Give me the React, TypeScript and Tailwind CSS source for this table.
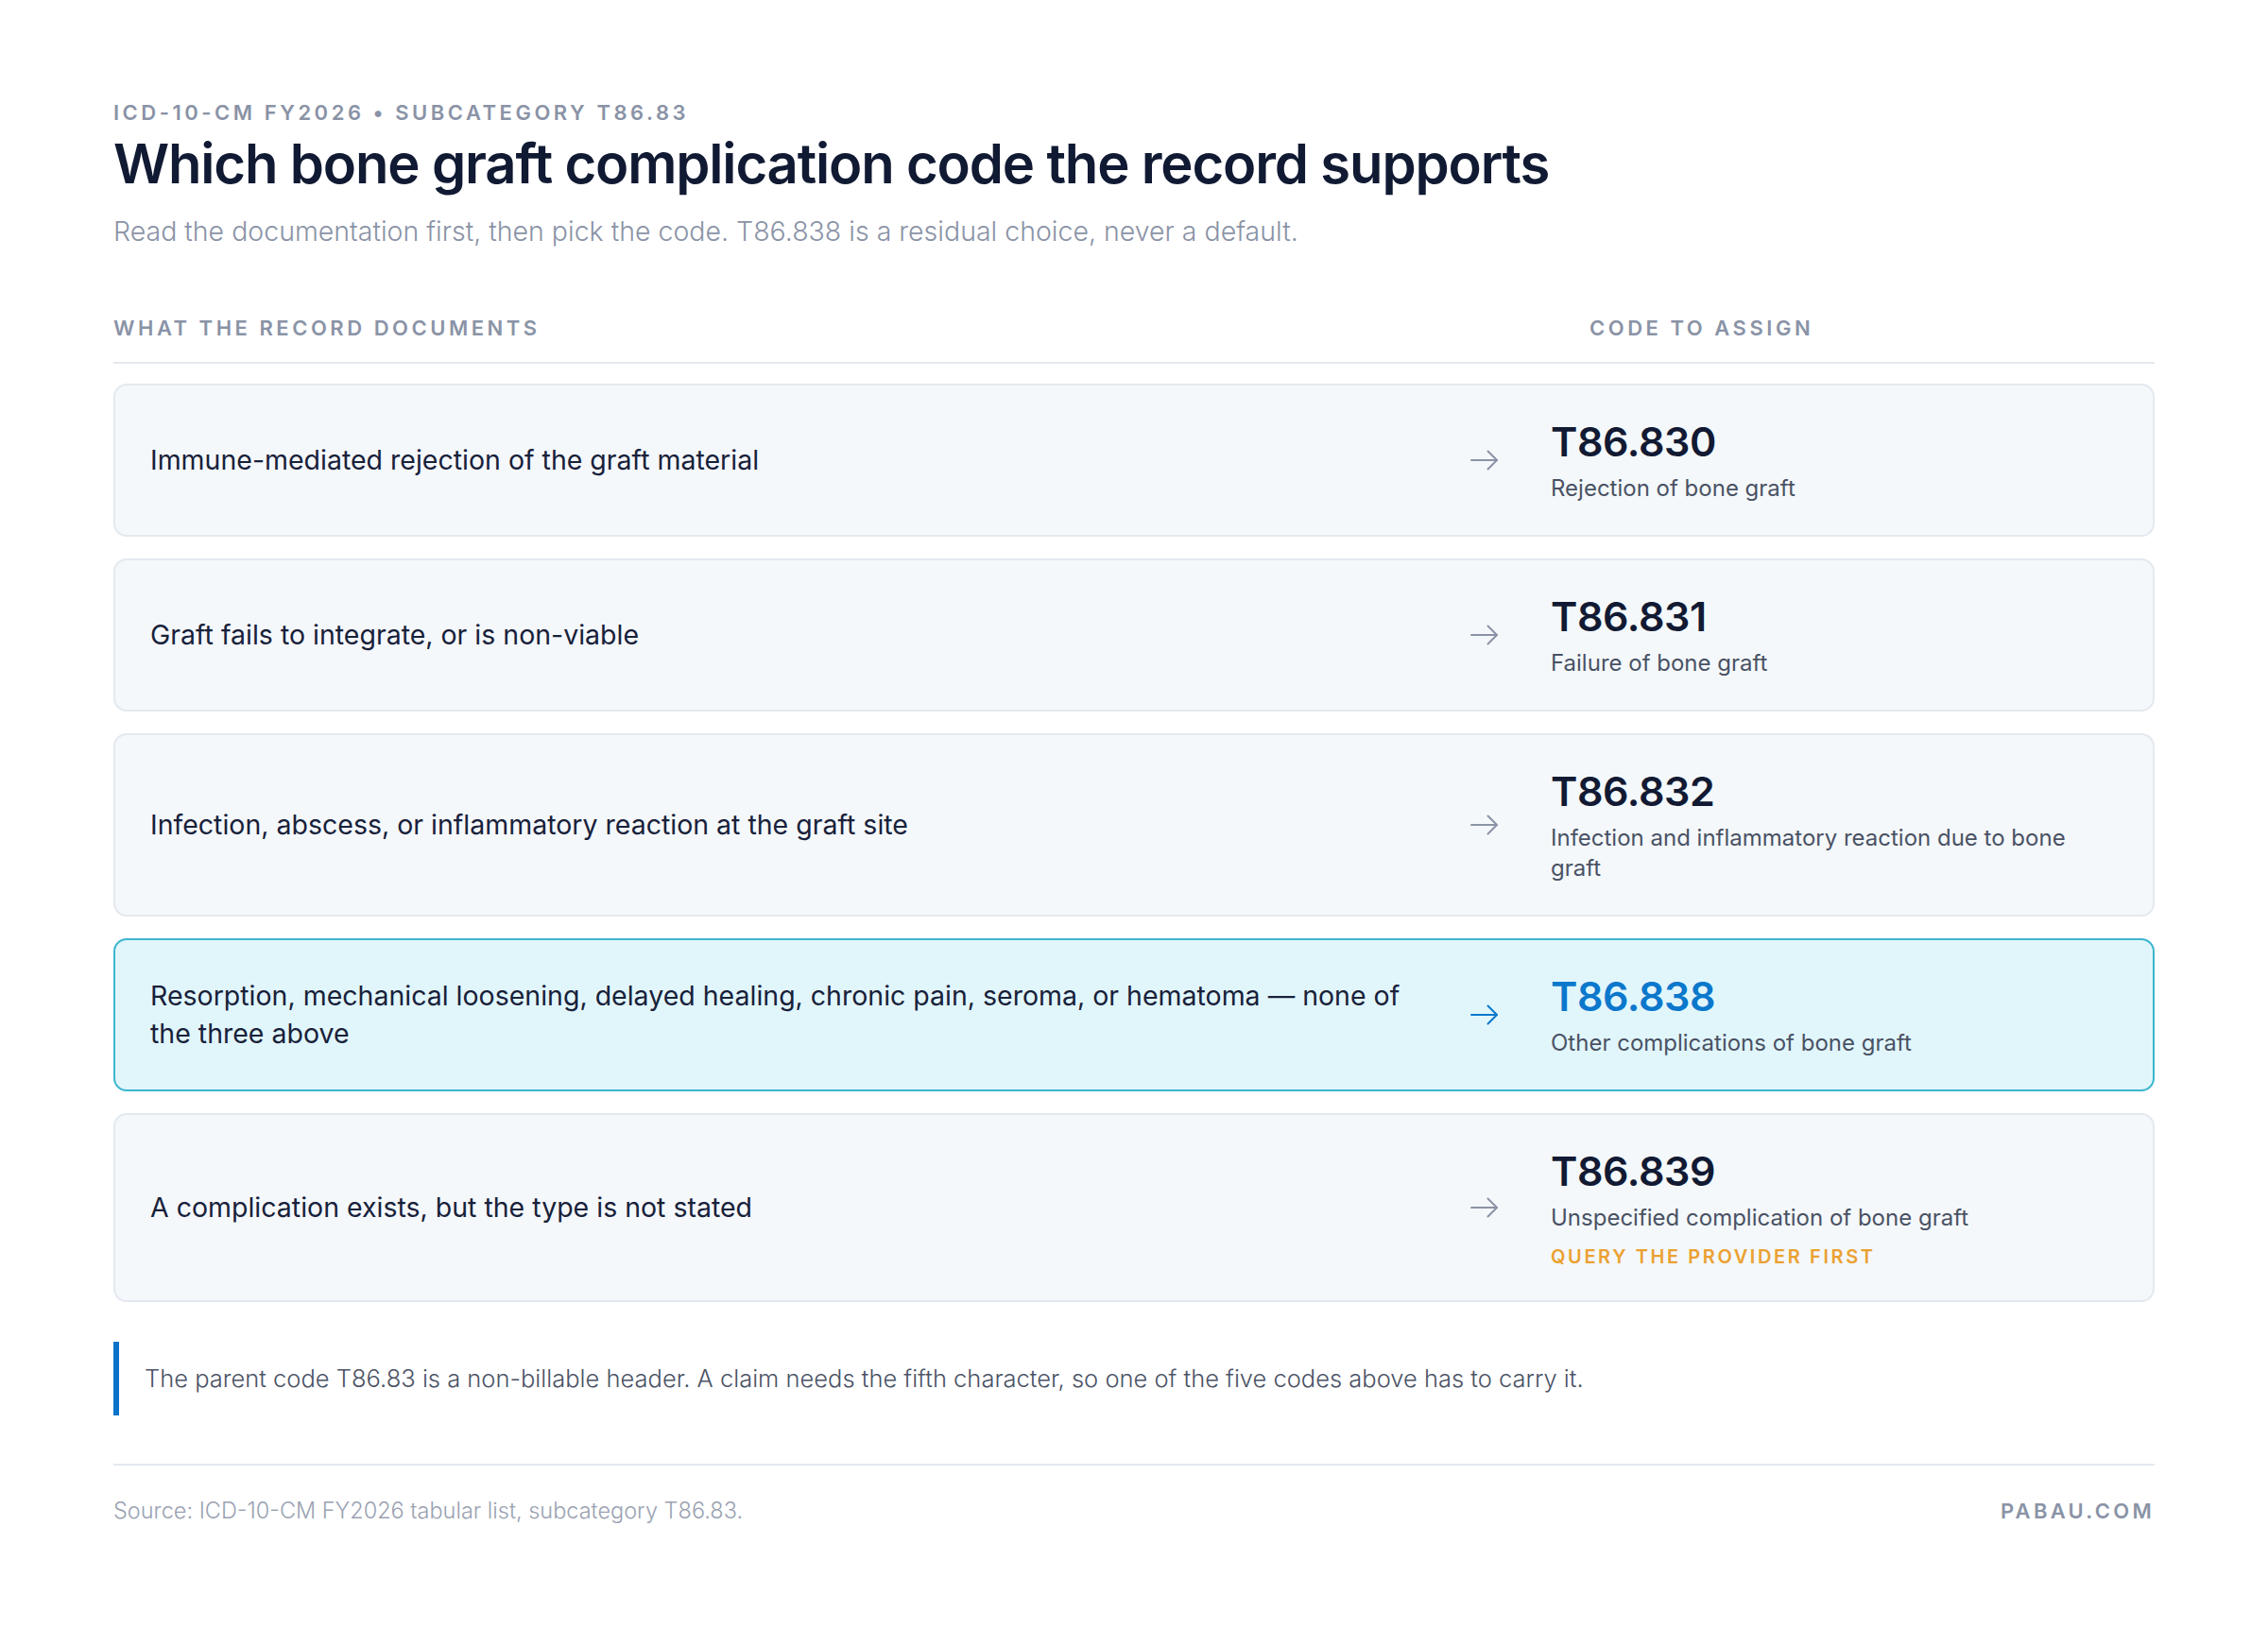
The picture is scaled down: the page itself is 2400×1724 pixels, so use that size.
import React from "react";

type Row = {
  documents: string;
  code: string;
  title: string;
  note?: string;
  highlight?: boolean;
};

const rows: Row[] = [
  {
    documents: "Immune-mediated rejection of the graft material",
    code: "T86.830",
    title: "Rejection of bone graft",
  },
  {
    documents: "Graft fails to integrate, or is non-viable",
    code: "T86.831",
    title: "Failure of bone graft",
  },
  {
    documents: "Infection, abscess, or inflammatory reaction at the graft site",
    code: "T86.832",
    title: "Infection and inflammatory reaction due to bone graft",
  },
  {
    documents:
      "Resorption, mechanical loosening, delayed healing, chronic pain, seroma, or hematoma — none of the three above",
    code: "T86.838",
    title: "Other complications of bone graft",
    highlight: true,
  },
  {
    documents: "A complication exists, but the type is not stated",
    code: "T86.839",
    title: "Unspecified complication of bone graft",
    note: "Query the provider first",
  },
];

function Arrow({ active }: { active?: boolean }) {
  return (
    <svg
      width="30"
      height="22"
      viewBox="0 0 30 22"
      fill="none"
      stroke={active ? "#0b78cc" : "#8b93a6"}
      strokeWidth="2"
      strokeLinecap="round"
      strokeLinejoin="round"
    >
      <path d="M1 11h27" />
      <path d="M18.5 1.5 28 11l-9.5 9.5" />
    </svg>
  );
}

function CodeRow({ row }: { row: Row }) {
  return (
    <div
      className={
        row.highlight
          ? "grid grid-cols-[1fr_30px_600px] items-center gap-x-[55px] rounded-[14px] border-2 border-[#3cb6cd] bg-[#e1f6fb] py-[33px] pl-[37px] pr-[37px]"
          : "grid grid-cols-[1fr_30px_600px] items-center gap-x-[55px] rounded-[14px] border-2 border-[#e4e9ef] bg-[#f4f8fb] py-[33px] pl-[37px] pr-[37px]"
      }
    >
      <p className="text-[28.5px] leading-[40px] text-[#18213a]">{row.documents}</p>
      <Arrow active={row.highlight} />
      <div>
        <p
          className={
            row.highlight
              ? "text-[43px] font-semibold leading-[52px] tracking-[-0.01em] text-[#0b78cc]"
              : "text-[43px] font-semibold leading-[52px] tracking-[-0.01em] text-[#121a33]"
          }
        >
          {row.code}
        </p>
        <p className="mt-2 text-[24px] leading-[32px] text-[#4a5264]">{row.title}</p>
        {row.note ? (
          <p className="mt-[12px] text-[20px] font-semibold uppercase leading-[26px] tracking-[0.13em] text-[#eba132]">
            {row.note}
          </p>
        ) : null}
      </div>
    </div>
  );
}

export default function App() {
  return (
    <div className="min-h-[1724px] bg-white px-[120px] pt-[106px] font-['Inter',sans-serif]">
      <p className="text-[22px] font-semibold uppercase leading-[26px] tracking-[0.16em] text-[#8a93a6]">
        ICD-10-CM FY2026 • Subcategory T86.83
      </p>
      <h1 className="mt-[7px] text-[58px] font-semibold leading-[68px] tracking-[-0.02em] text-[#111a33]">
        Which bone graft complication code the record supports
      </h1>
      <p className="mt-[20px] text-[28.5px] font-light leading-[36px] text-[#8a93a6]">
        Read the documentation first, then pick the code. T86.838 is a residual choice, never a default.
      </p>

      <div className="mt-[71px] flex items-center justify-between border-b-2 border-[#e4e9ef] pb-[23px]">
        <p className="text-[22px] font-semibold uppercase leading-[26px] tracking-[0.16em] text-[#8a93a6]">
          What the record documents
        </p>
        <p className="w-[598px] text-[22px] font-semibold uppercase leading-[26px] tracking-[0.16em] text-[#8a93a6]">
          Code to assign
        </p>
      </div>

      <div className="mt-[21px] flex flex-col gap-[23px]">
        {rows.map((row) => (
          <CodeRow key={row.code} row={row} />
        ))}
      </div>

      <div className="mt-[42px] flex h-[78px] items-center border-l-[6px] border-[#0b73c9] pl-[27px]">
        <p className="text-[25.5px] font-light leading-[34px] text-[#4b5366]">
          The parent code T86.83 is a non-billable header. A claim needs the fifth character, so one of the five codes
          above has to carry it.
        </p>
      </div>

      <div className="mt-[51px] flex items-center justify-between border-t-2 border-[#e4e9ef] pt-[35px]">
        <p className="text-[23.5px] font-light leading-[26px] text-[#9aa2b2]">
          Source: ICD-10-CM FY2026 tabular list, subcategory T86.83.
        </p>
        <p className="text-[22px] font-semibold uppercase leading-[26px] tracking-[0.15em] text-[#8a93a6]">
          pabau.com
        </p>
      </div>
    </div>
  );
}
